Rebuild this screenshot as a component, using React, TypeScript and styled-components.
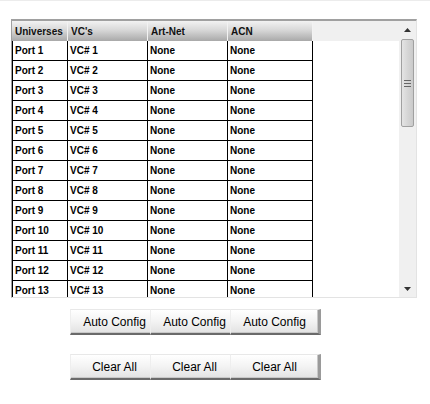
import styled, { createGlobalStyle } from "styled-components";

const GlobalStyle = createGlobalStyle`
  html, body {
    margin: 0;
    padding: 0;
    background: #ffffff;
  }
  body {
    font-family: "Liberation Sans", Arial, sans-serif;
  }
`;

const Page = styled.div`
  width: 430px;
  height: 404px;
  border-top: 1px solid #ececec;
  box-sizing: border-box;
  padding: 18px 0 0 11px;
`;

const Frame = styled.div`
  width: 406px;
  height: 279px;
  box-sizing: border-box;
  border-top: 2px solid #a0a0a0;
  border-left: 1px solid #a0a0a0;
  border-right: 1px solid #e3e3e3;
  border-bottom: 1px solid #e3e3e3;
  display: flex;
  overflow: hidden;
`;

const TableArea = styled.div`
  flex: 1;
  overflow: hidden;
  background: #ffffff;
`;

const HeaderFill = styled.div`
  height: 20px;
  background: #f0f0f0;
  display: flex;
`;

const Grid = styled.div`
  display: grid;
  grid-template-columns: 56px 80px 80px 85px;
`;

const HeadCell = styled.div`
  height: 20px;
  box-sizing: border-box;
  padding-left: 3px;
  display: flex;
  align-items: center;
  font-size: 10px;
  font-weight: bold;
  color: #111;
  background: linear-gradient(#f2f2f2, #d8d8d8 45%, #a9a9a9);
  border-right: 1px solid #f2f2f2;
`;

const Cell = styled.div<{ $first?: boolean }>`
  height: 20px;
  box-sizing: border-box;
  padding-left: 2px;
  display: flex;
  align-items: center;
  font-size: 10px;
  font-weight: bold;
  color: #000;
  border-right: 1px solid #000;
  border-bottom: 1px solid #000;
  border-left: ${({ $first }) => ($first ? "1px solid #000" : "none")};
`;

const Scrollbar = styled.div`
  width: 17px;
  background: #f0f0f0;
  display: flex;
  flex-direction: column;
  align-items: center;
`;

const Arrow = styled.div`
  height: 17px;
  width: 17px;
  display: flex;
  align-items: center;
  justify-content: center;
`;

const Thumb = styled.div`
  width: 13px;
  height: 88px;
  margin-top: 1px;
  box-sizing: border-box;
  border: 1px solid #a0a0a0;
  border-radius: 2px;
  background: linear-gradient(90deg, #e4e4e4, #d6d6d6 50%, #cacaca);
  display: flex;
  align-items: center;
  justify-content: center;
`;

const Track = styled.div`
  flex: 1;
`;

const ButtonRow = styled.div`
  display: flex;
  padding-left: 59px;
  margin-top: 11px;
  & + & {
    margin-top: 19px;
  }
`;

const Button = styled.div`
  width: 91px;
  height: 26px;
  box-sizing: border-box;
  margin-left: -11px;
  &:first-child {
    margin-left: 0;
  }
  display: flex;
  align-items: center;
  justify-content: center;
  font-family: "Liberation Sans", "Noto Sans CJK JP", sans-serif;
  font-size: 12px;
  color: #000;
  background: linear-gradient(#ffffff, #f3f3f3 50%, #e2e2e2);
  border-top: 1px solid #e8e8e8;
  border-left: 1px solid #eeeeee;
  border-right: 3px solid #9a9a9a;
  border-bottom: 2px solid #6a6a6a;
  box-shadow: inset -1px -1px 0 #c8c8c8;
`;

const ports = Array.from({ length: 13 }, (_, i) => i + 1);

export default function App() {
  return (
    <>
      <GlobalStyle />
      <Page>
        <Frame>
          <TableArea>
            <HeaderFill>
              <Grid>
                <HeadCell>Universes</HeadCell>
                <HeadCell>VC's</HeadCell>
                <HeadCell>Art-Net</HeadCell>
                <HeadCell>ACN</HeadCell>
              </Grid>
            </HeaderFill>
            <Grid>
              {ports.map((p) => [
                <Cell key={`u${p}`} $first>
                  Port {p}
                </Cell>,
                <Cell key={`v${p}`}>VC# {p}</Cell>,
                <Cell key={`a${p}`}>None</Cell>,
                <Cell key={`c${p}`}>None</Cell>,
              ])}
            </Grid>
          </TableArea>
          <Scrollbar>
            <Arrow>
              <svg width="7" height="4" viewBox="0 0 7 4">
                <path d="M3.5 0 L7 4 L0 4 Z" fill="#333" />
              </svg>
            </Arrow>
            <Thumb>
              <svg width="7" height="7" viewBox="0 0 7 7">
                <rect x="0" y="0" width="7" height="1" fill="#666" />
                <rect x="0" y="3" width="7" height="1" fill="#666" />
                <rect x="0" y="6" width="7" height="1" fill="#666" />
              </svg>
            </Thumb>
            <Track />
            <Arrow>
              <svg width="7" height="4" viewBox="0 0 7 4">
                <path d="M0 0 L7 0 L3.5 4 Z" fill="#333" />
              </svg>
            </Arrow>
          </Scrollbar>
        </Frame>
        <ButtonRow>
          <Button>Auto Config</Button>
          <Button>Auto Config</Button>
          <Button>Auto Config</Button>
        </ButtonRow>
        <ButtonRow>
          <Button>Clear All</Button>
          <Button>Clear All</Button>
          <Button>Clear All</Button>
        </ButtonRow>
      </Page>
    </>
  );
}
